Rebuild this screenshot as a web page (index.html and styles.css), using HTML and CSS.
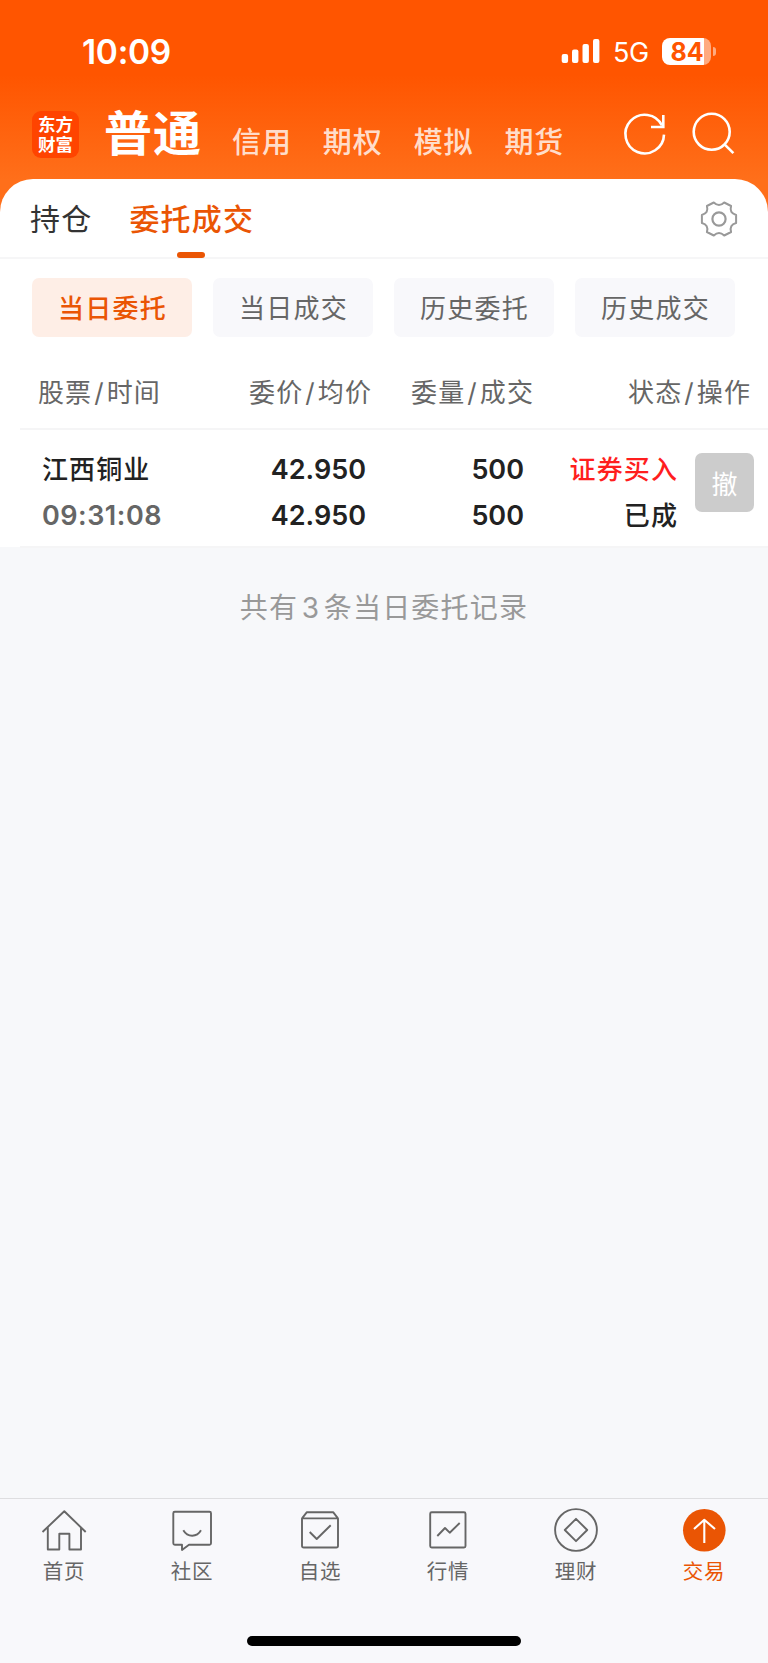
FILE: index.html
```html
<!DOCTYPE html>
<html lang="zh-CN">
<head>
  <meta charset="UTF-8" />
  <meta name="viewport" content="width=device-width, initial-scale=1.0" />
  <title>委托成交</title>
  <link rel="stylesheet" href="styles.css">
</head>
<body>
  <header class="top">
    <div class="status">
      <div class="clock">10:09</div>
      <svg class="signal" width="40" height="26" viewBox="0 0 40 26" fill="#fff">
        <rect x="0.7" y="16" width="6.4" height="9" rx="2" />
        <rect x="11" y="11.5" width="6.4" height="13.5" rx="2" />
        <rect x="21.5" y="6" width="6.4" height="19" rx="2" />
        <rect x="32" y="1" width="6.4" height="24" rx="2" />
      </svg>
      <div class="network">5G</div>
      <div class="battery">84</div>
      <div class="battery-tip"></div>
    </div>
    <div class="accounts">
      <div class="logo">东方<br>财富</div>
      <h1>普通</h1>
      <nav class="account-links">
        <a>信用</a>
        <a>期权</a>
        <a>模拟</a>
        <a>期货</a>
      </nav>
      <svg class="refresh" width="48" height="48" viewBox="0 0 48 48" fill="none" stroke="#fff" stroke-width="2.6">
        <path d="M43 24.6A19.3 19.3 0 1 1 41 15.5" />
        <path d="M42.3 5V17H30" />
      </svg>
      <svg class="search" width="48" height="48" viewBox="0 0 48 48" fill="none" stroke="#fff" stroke-width="2.6">
        <circle cx="21.7" cy="21.8" r="18" />
        <path d="M34.5 34.3L43.4 43.1" />
      </svg>
    </div>
  </header>

  <main class="sheet">
    <div class="tabs">
      <a class="tab">持仓</a>
      <a class="tab active">委托成交</a>
      <svg class="gear" width="40" height="40" viewBox="-20 -20 40 40" fill="none" stroke="#999" stroke-width="2" stroke-linejoin="round">
        <path d="M17.1 -4V4Q10 5.8 12.1 13L5.2 16.5Q0 11.5 -5.2 16.5L-12.1 13Q-10 5.8 -17.1 4V-4Q-10 -5.8 -12.1 -13L-5.2 -16.5Q0 -11.5 5.2 -16.5L12.1 -13Q10 -5.8 17.1 -4Z" />
        <circle r="6.6" stroke-width="2.2" />
      </svg>
    </div>

    <div class="chips">
      <a class="chip active">当日委托</a>
      <a class="chip">当日成交</a>
      <a class="chip">历史委托</a>
      <a class="chip">历史成交</a>
    </div>

    <div class="cols head">
      <div>股票<i>/</i>时间</div>
      <div>委价<i>/</i>均价</div>
      <div>委量<i>/</i>成交</div>
      <div>状态<i>/</i>操作</div>
    </div>

    <div class="cols order">
      <div><p class="cn">江西铜业</p><p class="time">09:31:08</p></div>
      <div><p>42.950</p><p>42.950</p></div>
      <div><p>500</p><p>500</p></div>
      <div><p class="cn buy">证券买入</p><p class="cn">已成</p></div>
      <button class="cancel">撤</button>
    </div>
  </main>

  <p class="total">共有<span>3</span>条当日委托记录</p>

  <footer class="bottom">
    <nav class="menu">
      <a>
        <svg width="48" height="48" viewBox="0 0 48 48">
          <path d="M2.5 26L24.3 5.2L45.7 26M7.8 21.5V43.5H19.3V27.8H29.4V43.5H41V21.5" />
        </svg>
        首页
      </a>
      <a>
        <svg width="48" height="48" viewBox="0 0 48 48">
          <path d="M6.8 5.7H41.5Q43 5.7 43 7.2V37.2Q43 38.7 41.5 38.7H21L14 44V38.7H6.8Q5.3 38.7 5.3 37.2V7.2Q5.3 5.7 6.8 5.7Z" />
          <path d="M15.3 24.3Q18.5 29.7 24.2 29.7T33 24.3" />
        </svg>
        社区
      </a>
      <a>
        <svg width="48" height="48" viewBox="0 0 48 48">
          <path d="M6 12.4L10.7 6.3H37.3L42 12.4M6 12.4H42V39.7Q42 41.5 40.2 41.5H7.8Q6 41.5 6 39.7Z" />
          <path d="M13.7 26L20.7 33L34.7 19.3" />
        </svg>
        自选
      </a>
      <a>
        <svg width="48" height="48" viewBox="0 0 48 48">
          <rect x="6.2" y="6.2" width="35.3" height="35.3" rx="1.5" />
          <path d="M13.3 30L21 22L25.7 26.7L35.7 17" />
        </svg>
        行情
      </a>
      <a>
        <svg width="48" height="48" viewBox="0 0 48 48">
          <circle cx="24" cy="24" r="20.9" />
          <path d="M24 12.8L35.2 24L24 35.2L12.8 24Z" />
        </svg>
        理财
      </a>
      <a class="active">
        <svg width="48" height="48" viewBox="0 0 48 48">
          <circle cx="24.3" cy="24.3" r="21.3" fill="#ea5504" stroke="none" />
          <path d="M24.3 14V37M14 23L24.3 13.8L35 23" stroke="#fff" stroke-width="2.1" />
        </svg>
        交易
      </a>
    </nav>
    <div class="home-bar"></div>
  </footer>
</body>
</html>
```
FILE: styles.css
```css
* {
  box-sizing: border-box;
}
body {
  margin: 0;
  min-height: 1663px;
  display: flex;
  flex-direction: column;
  font-family: Inter, "Noto Sans CJK SC", sans-serif;
  background-color: #f7f8fa;
  color: #222;
}
p, h1 {
  margin: 0;
}
.top {
  height: 213px;
  background: linear-gradient(#ff5500 75px, #ff6f1a 180px);
  color: #fff;
}
.status {
  display: flex;
  align-items: center;
  height: 102px;
  padding: 0 52px 0 82px;
}
.clock {
  font-size: 33.5px;
  font-weight: 600;
  letter-spacing: -0.3px;
  margin-right: auto;
  padding-top: 2px;
}
.signal {
  margin-right: 12px;
}
.network {
  width: 49px;
  padding-top: 2px;
  font-size: 27px;
  letter-spacing: -0.3px;
}
.battery {
  width: 49px;
  height: 27px;
  padding-left: 1px;
  border-radius: 8px;
  background: linear-gradient(90deg, #fff 42px, rgba(255, 255, 255, 0.5) 42px);
  color: #ff5500;
  font-size: 25px;
  font-weight: 700;
  line-height: 28px;
  text-align: center;
}
.battery-tip {
  width: 3px;
  height: 9px;
  margin-left: 2px;
  border-radius: 0 4px 4px 0;
  background-color: rgba(255, 255, 255, 0.5);
}
.accounts {
  display: flex;
  align-items: center;
  height: 64px;
  padding: 0 30px 0 32px;
}
.logo {
  width: 47px;
  height: 47px;
  padding-top: 4px;
  border-radius: 9px;
  background-color: #ff4400;
  font-size: 17.5px;
  font-weight: 700;
  line-height: 20px;
  text-align: center;
}
h1 {
  margin-left: 25px;
  font-size: 48px;
  font-weight: 700;
  line-height: 60px;
  letter-spacing: 1px;
}
.account-links {
  display: flex;
  gap: 31px;
  margin-left: 30px;
  padding-top: 17px;
}
.account-links a {
  font-size: 29px;
  font-weight: 500;
  line-height: 36px;
  letter-spacing: 0.9px;
  color: rgba(255, 255, 255, 0.8);
}
.refresh {
  margin-left: auto;
}
.search {
  margin-left: 21px;
}
.sheet {
  height: 368px;
  margin-top: -34px;
  padding-top: 1px;
  border-radius: 33px 33px 0 0;
  background-color: #fff;
}
.tabs {
  display: flex;
  align-items: center;
  height: 79px;
  padding: 0 29px 0 30px;
  border-bottom: 2px solid #f6f6f7;
}
.tab {
  position: relative;
  margin-right: 37px;
  font-size: 30px;
  line-height: 78px;
  letter-spacing: 1.2px;
  color: #333;
}
.tab.active {
  color: #ea5504;
  font-weight: 500;
}
.tab.active::after {
  content: "";
  position: absolute;
  left: 48px;
  bottom: 0;
  width: 28px;
  height: 6px;
  border-radius: 3px;
  background-color: #ea5504;
}
.gear {
  margin-left: auto;
}
.chips {
  display: grid;
  grid-template-columns: repeat(4, 160px);
  justify-content: space-between;
  padding: 19px 33px 0 32px;
}
.chip {
  height: 59px;
  border-radius: 7px;
  background-color: #f8f8fb;
  color: #666;
  font-size: 26px;
  line-height: 61px;
  letter-spacing: 1.2px;
  text-indent: 1px;
  text-align: center;
}
.chip.active {
  background-color: #feeee6;
  color: #ea5504;
  font-weight: 500;
}
.cols {
  display: grid;
  margin-left: 20px;
  border-bottom: 2px solid #f5f5f6;
  text-align: right;
}
.cols > div:first-child {
  text-align: left;
}
.head {
  grid-template-columns: 160px 174px 162px 217px;
  height: 93px;
  padding-left: 18px;
  color: #666;
  font-size: 26px;
  line-height: 112px;
  letter-spacing: 1.1px;
}
.head i {
  margin: 0 2px;
  font-style: normal;
}
.order {
  grid-template-columns: 160px 164px 158px 154px 59px;
  height: 118px;
  padding: 17px 0 0 22px;
  font-size: 27px;
  font-weight: 600;
}
.order p {
  line-height: 45.5px;
}
.order .cn {
  font-size: 26px;
  font-weight: 500;
  letter-spacing: 1.1px;
}
.order .time {
  color: #666;
  letter-spacing: 0.5px;
}
.order .buy {
  color: #ff1e1e;
}
.cancel {
  width: 59px;
  height: 59px;
  margin: 6px 0 0 17px;
  padding: 0;
  border: none;
  border-radius: 7px;
  background-color: #ccc;
  color: #fff;
  font-family: inherit;
  font-size: 26px;
}
.total {
  margin-top: 39px;
  color: #999;
  font-size: 28px;
  line-height: 44px;
  letter-spacing: 1.2px;
  text-align: center;
}
.total span {
  margin: 0 3.5px;
}
.bottom {
  margin-top: auto;
  height: 165px;
  border-top: 1px solid #dedee0;
  background-color: #f8f8fb;
}
.menu {
  display: grid;
  grid-template-columns: repeat(6, 1fr);
  padding-top: 7px;
}
.menu a {
  display: flex;
  flex-direction: column;
  align-items: center;
  color: #666;
  font-size: 20.5px;
  line-height: 36px;
  letter-spacing: 0.8px;
}
.menu svg {
  fill: none;
  stroke: #666;
  stroke-width: 1.9;
  stroke-linejoin: round;
}
.menu .active {
  color: #ea5504;
}
.home-bar {
  width: 274px;
  height: 10px;
  margin: 46px auto 0;
  border-radius: 5px;
  background-color: #000;
}
```
